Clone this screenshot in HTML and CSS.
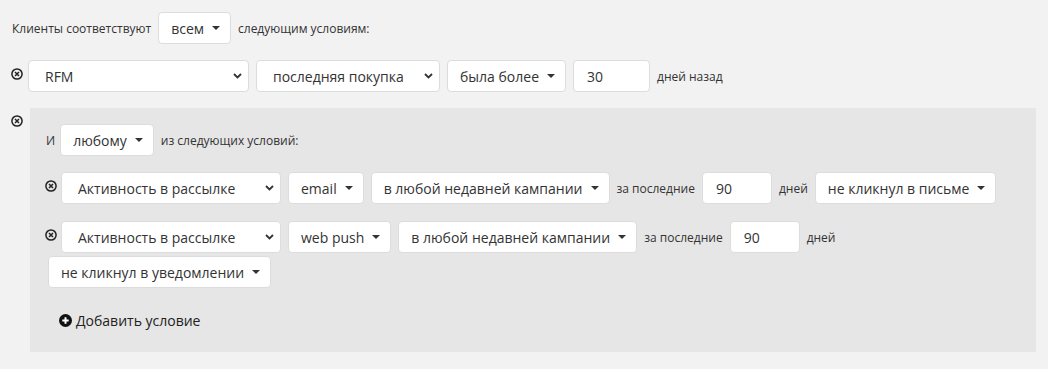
FILE: index.html
```html
<!DOCTYPE html>
<html lang="ru">
<head>
<meta charset="UTF-8">
<title>Условия сегмента</title>
<link rel="stylesheet" href="styles.css">
</head>
<body>
<div class="filter">
  <div class="line">
    <span class="label">Клиенты соответствуют</span>
    <div class="btn">всем <span class="caret"></span></div>
    <span class="label">следующим условиям:</span>
  </div>

  <div class="line">
    <span class="remove"><svg width="12" height="12" viewBox="0 0 12 12"><circle cx="6" cy="6" r="5.1" fill="none" stroke="#222" stroke-width="1.5"/><path d="M4 4l4 4M8 4l-4 4" stroke="#222" stroke-width="1.5"/></svg></span>
    <div class="select w-rfm">RFM <svg class="chev" width="9" height="6" viewBox="0 0 9 6"><path d="M1 1l3.5 3.5L8 1" fill="none" stroke="#333" stroke-width="1.8"/></svg></div>
    <div class="select w-last">последняя покупка <svg class="chev" width="9" height="6" viewBox="0 0 9 6"><path d="M1 1l3.5 3.5L8 1" fill="none" stroke="#333" stroke-width="1.8"/></svg></div>
    <div class="btn">была более <span class="caret"></span></div>
    <div class="input w-days">30</div>
    <span class="label">дней назад</span>
  </div>

  <div class="group-line">
    <span class="remove group-remove"><svg width="12" height="12" viewBox="0 0 12 12"><circle cx="6" cy="6" r="5.1" fill="none" stroke="#222" stroke-width="1.5"/><path d="M4 4l4 4M8 4l-4 4" stroke="#222" stroke-width="1.5"/></svg></span>
    <div class="group">
      <div class="line">
        <span class="label and">И</span>
        <div class="btn">любому <span class="caret"></span></div>
        <span class="label">из следующих условий:</span>
      </div>

      <div class="line cond">
        <span class="remove"><svg width="12" height="12" viewBox="0 0 12 12"><circle cx="6" cy="6" r="5.1" fill="none" stroke="#222" stroke-width="1.5"/><path d="M4 4l4 4M8 4l-4 4" stroke="#222" stroke-width="1.5"/></svg></span>
        <div class="select w-act">Активность в рассылке <svg class="chev" width="9" height="6" viewBox="0 0 9 6"><path d="M1 1l3.5 3.5L8 1" fill="none" stroke="#333" stroke-width="1.8"/></svg></div>
        <div class="btn">email <span class="caret"></span></div>
        <div class="btn">в любой недавней кампании <span class="caret"></span></div>
        <span class="label">за последние</span>
        <div class="input w-90">90</div>
        <span class="label">дней</span>
        <div class="btn">не кликнул в письме <span class="caret"></span></div>
      </div>

      <div class="line cond">
        <span class="remove"><svg width="12" height="12" viewBox="0 0 12 12"><circle cx="6" cy="6" r="5.1" fill="none" stroke="#222" stroke-width="1.5"/><path d="M4 4l4 4M8 4l-4 4" stroke="#222" stroke-width="1.5"/></svg></span>
        <div class="select w-act">Активность в рассылке <svg class="chev" width="9" height="6" viewBox="0 0 9 6"><path d="M1 1l3.5 3.5L8 1" fill="none" stroke="#333" stroke-width="1.8"/></svg></div>
        <div class="btn">web push <span class="caret"></span></div>
        <div class="btn">в любой недавней кампании <span class="caret"></span></div>
        <span class="label">за последние</span>
        <div class="input w-90">90</div>
        <span class="label">дней</span>
        <div class="btn wrapped">не кликнул в уведомлении <span class="caret"></span></div>
      </div>

      <div class="add">
        <svg width="13" height="13" viewBox="0 0 13 13"><circle cx="6.5" cy="6.5" r="6.5" fill="#111"/><path d="M6.5 3.3v6.4M3.3 6.5h6.4" stroke="#fff" stroke-width="2"/></svg>
        Добавить условие
      </div>
    </div>
  </div>
</div>
</body>
</html>
```

FILE: styles.css
```css
body { margin: 0; background: #f2f2f2; font-family: "Open Sans", Arial, sans-serif; color: #333; }
.filter { padding: 12px 12px 17px 12px; }
.line { display: flex; flex-wrap: wrap; align-items: center; column-gap: 7px; row-gap: 3px; margin-bottom: 16px; }
.label { font-size: 12px; color: #333; }
.btn, .select, .input { height: 32px; box-sizing: border-box; background: #fff; border: 1px solid #dcdcdc; border-radius: 4px; font-size: 14px; color: #333; display: flex; align-items: center; }
.btn { padding: 0 10px 0 12px; gap: 8px; }
.caret { width: 0; height: 0; border-left: 4px solid transparent; border-right: 4px solid transparent; border-top: 4px solid #333; }
.select { padding: 0 6px 0 16px; justify-content: space-between; }
.input { padding: 0 13px; }
.w-rfm { width: 221px; }
.w-last { width: 184px; }
.w-days { width: 77px; }
.w-act { width: 220px; }
.w-90 { width: 70px; }
.remove { flex-shrink: 0; width: 12px; height: 12px; display: flex; margin-left: -1px; margin-right: -2px; margin-top: -4px; }
.group-line { display: flex; align-items: flex-start; }
.group-remove { margin-top: 7px; margin-right: 7px; }
.group { flex: 1; background: #e6e6e6; padding: 16px; }
.and { margin-right: -2px; }
.cond { margin-bottom: 17px; }
.cond + .cond { margin-bottom: 0; }
.cond .remove { margin-right: -3px; }
.wrapped { margin-left: 2px; }
.add { height: 32px; display: flex; align-items: center; gap: 4px; padding: 0 13px; margin-top: 16px; font-size: 14px; color: #222; }
```
